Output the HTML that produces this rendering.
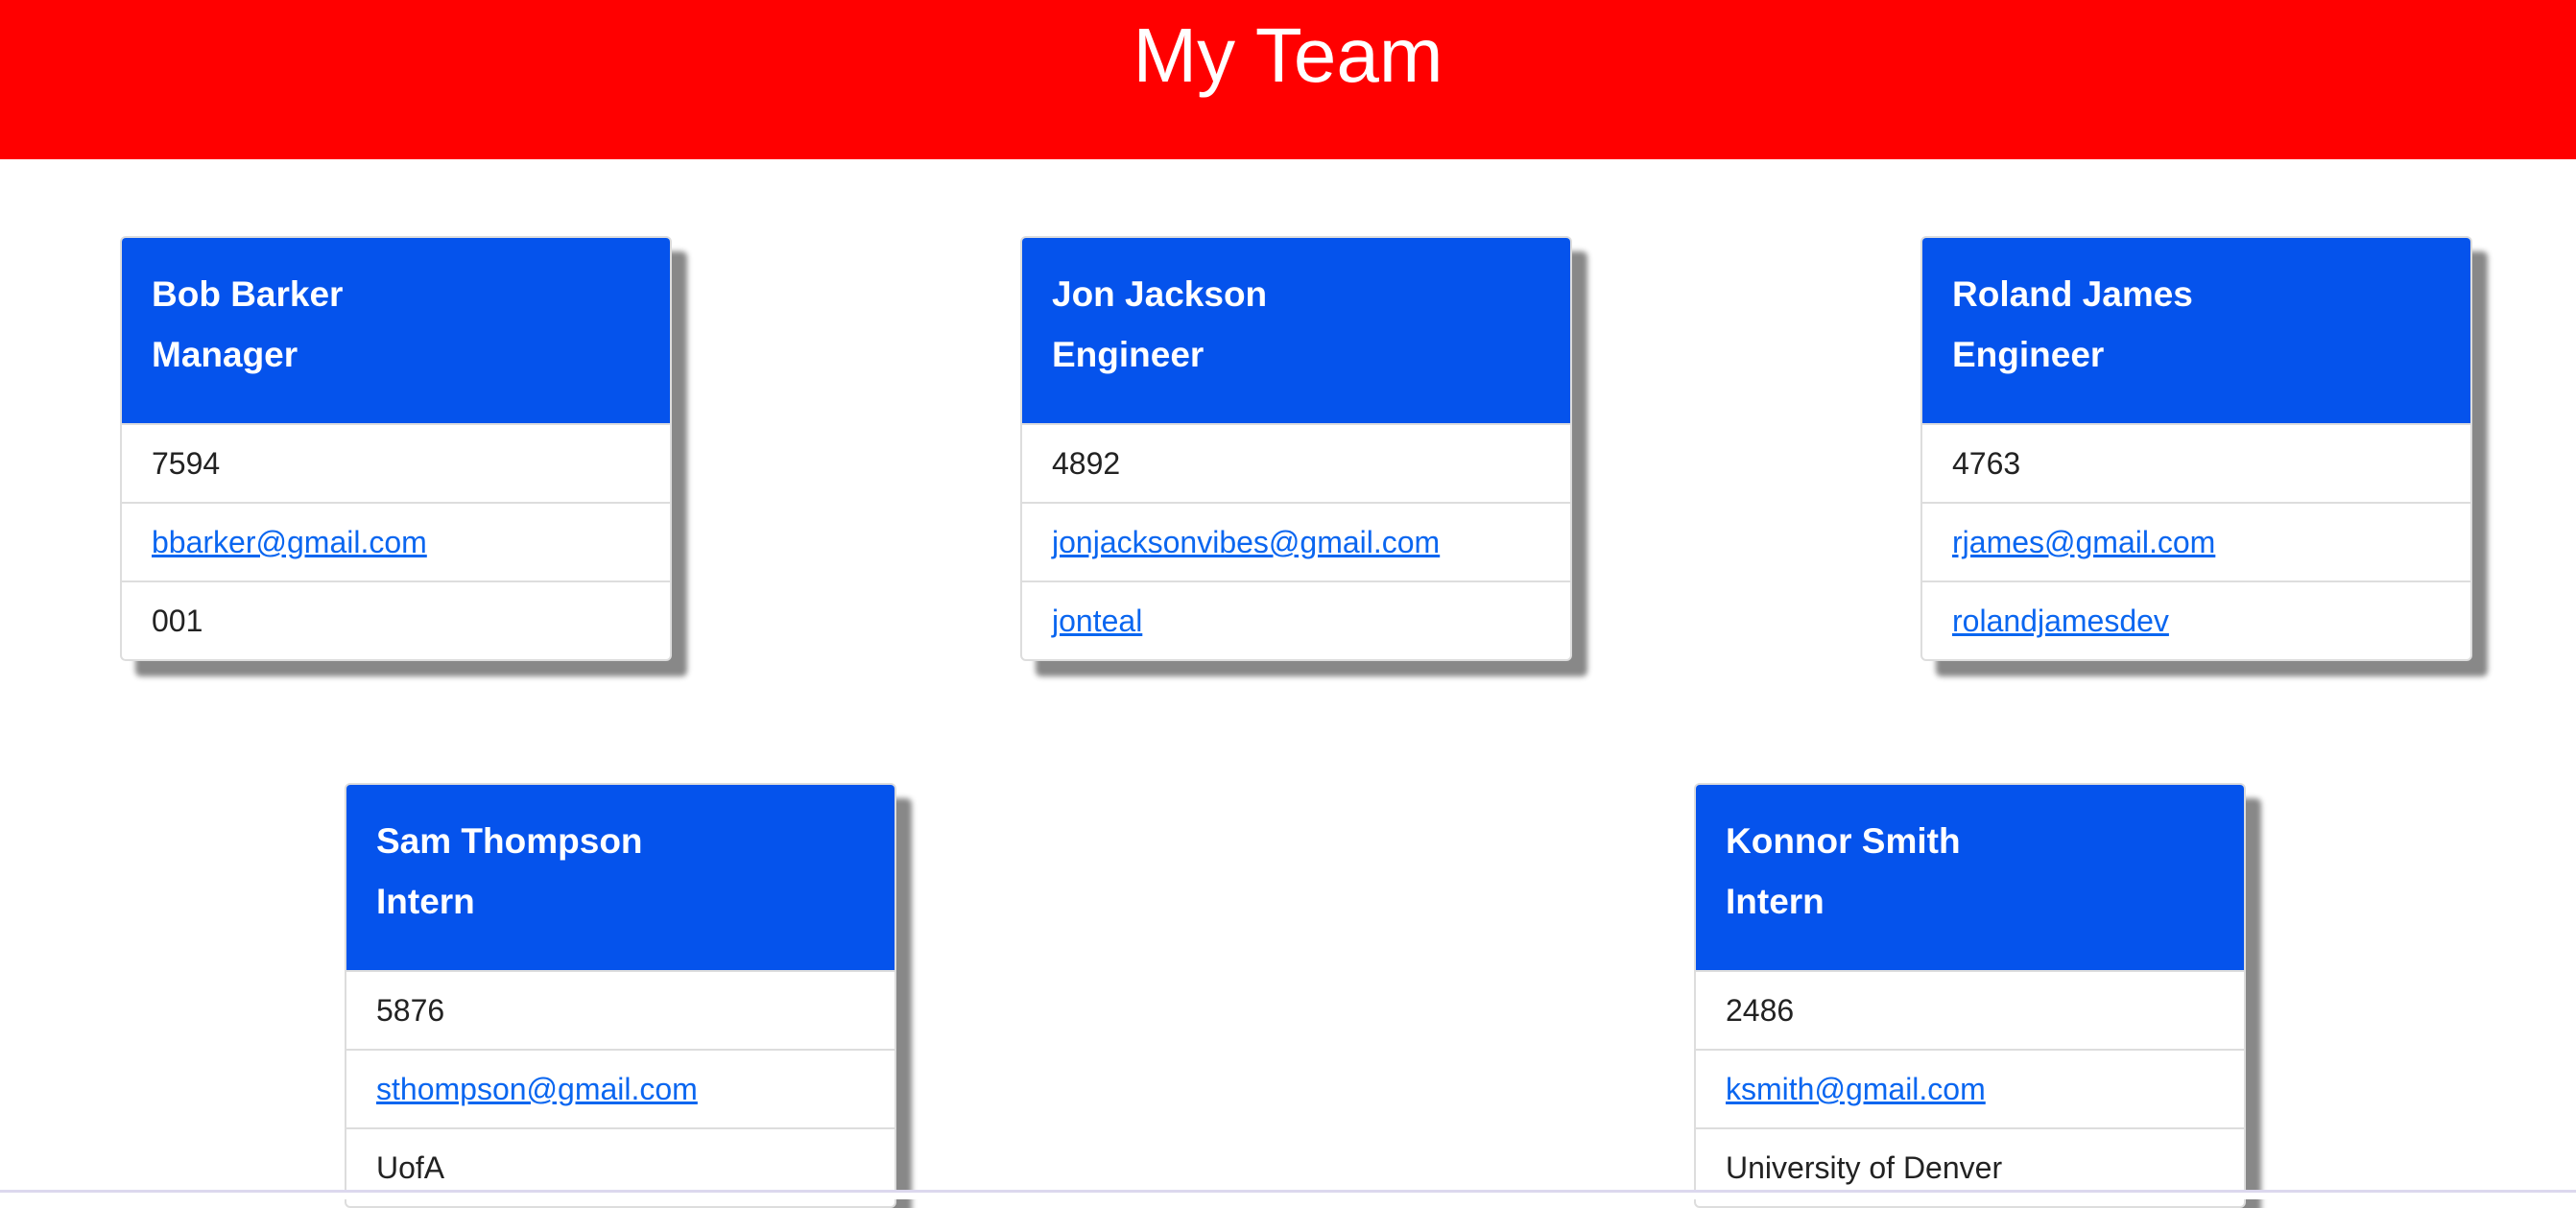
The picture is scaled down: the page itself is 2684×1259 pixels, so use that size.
<!DOCTYPE html>
<html><head><style>
body{margin:0;width:2684px;height:1250px;overflow:hidden;background:#fff;font-family:"Liberation Sans",Arial,sans-serif;position:relative}
.hd{position:absolute;left:0;top:0;width:2684px;height:166px;background:#ff0000;color:#fff;text-align:center;font-size:80px;line-height:116px}
.card{position:absolute;width:571px;border:2px solid #ddd;border-radius:6px;background:#fff;box-shadow:16px 16px 6px #888;overflow:hidden}
.ch{background:#0553ec;color:#fff;height:193px;box-sizing:border-box;padding:27px 31px 0;font-size:37px;line-height:63px;font-weight:bold}
.row{height:80px;border-top:2px solid #ddd;box-sizing:content-box;padding:0 31px;font-size:32px;line-height:80px;color:#222}
.row a{color:#0a66f0;text-decoration:underline}
.line{position:absolute;left:0;top:1240px;width:2684px;height:3px;background:#dcd8ee}
.below{position:absolute;left:0;top:1243px;width:2684px;height:7px;background:#fff}
</style></head><body>
<div class="hd">My Team</div>
<div class="card" style="left:125px;top:246px"><div class="ch">Bob Barker<br>Manager</div><div class="row">7594</div><div class="row"><a>bbarker@gmail.com</a></div><div class="row">001</div></div>
<div class="card" style="left:1063px;top:246px"><div class="ch">Jon Jackson<br>Engineer</div><div class="row">4892</div><div class="row"><a>jonjacksonvibes@gmail.com</a></div><div class="row"><a>jonteal</a></div></div>
<div class="card" style="left:2001px;top:246px"><div class="ch">Roland James<br>Engineer</div><div class="row">4763</div><div class="row"><a>rjames@gmail.com</a></div><div class="row"><a>rolandjamesdev</a></div></div>
<div class="card" style="left:359px;top:816px"><div class="ch">Sam Thompson<br>Intern</div><div class="row">5876</div><div class="row"><a>sthompson@gmail.com</a></div><div class="row">UofA</div></div>
<div class="card" style="left:1765px;top:816px"><div class="ch">Konnor Smith<br>Intern</div><div class="row">2486</div><div class="row"><a>ksmith@gmail.com</a></div><div class="row">University of Denver</div></div>
<div class="line"></div>
<div class="below"></div>
</body></html>
